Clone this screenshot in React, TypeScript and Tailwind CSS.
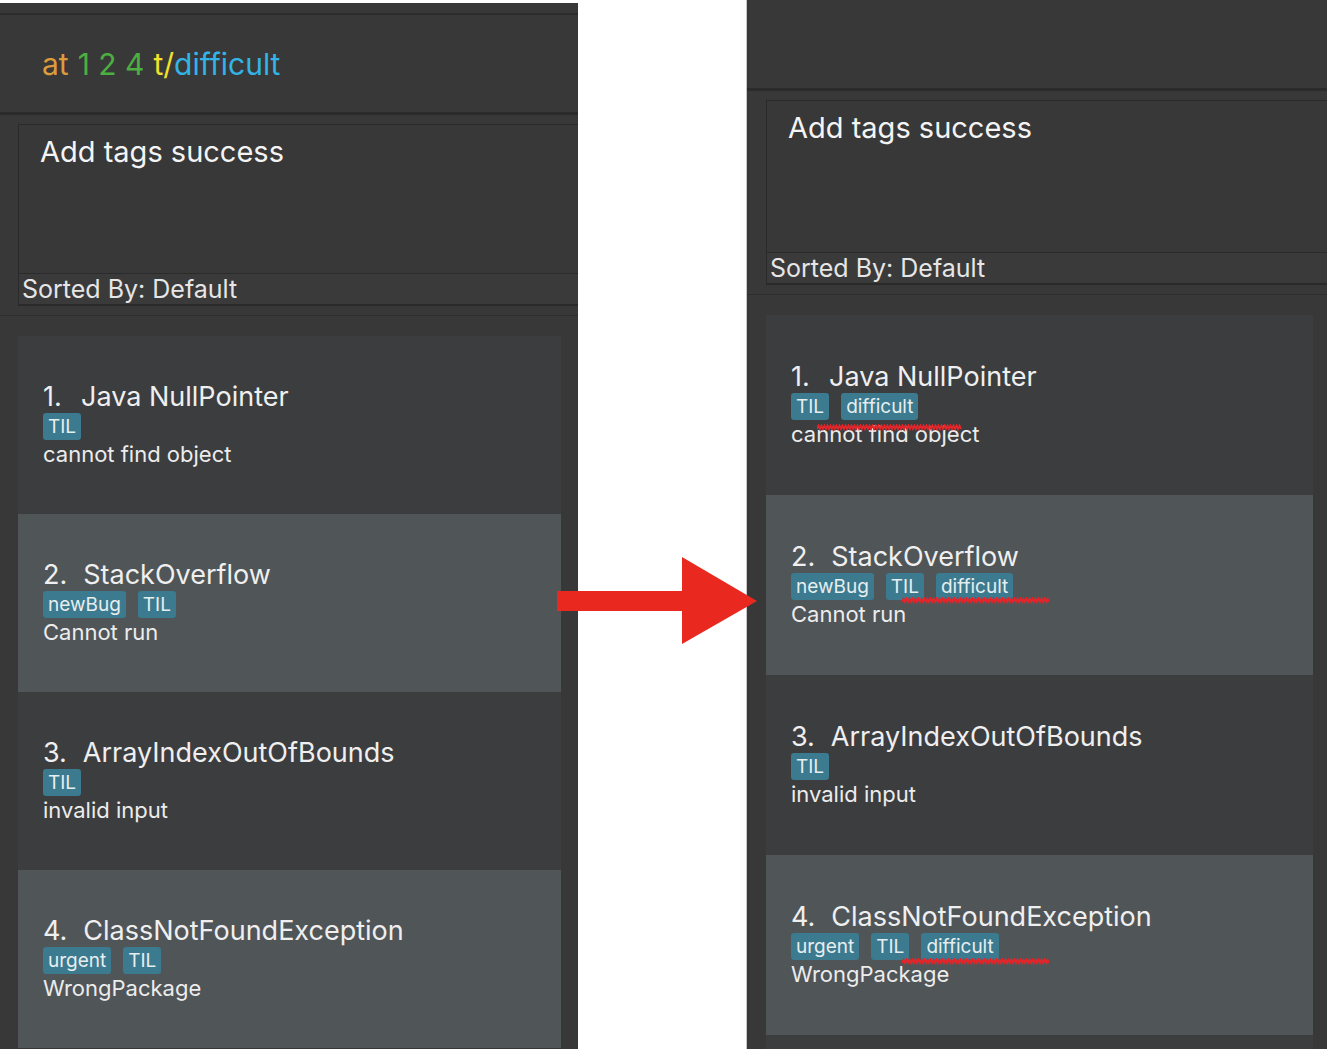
import React from 'react';

type Item = { name: string; tags: string[]; desc: string; squiggle?: { x: number; y: number; w: number } };

const font = { fontFamily: 'Inter, "Noto Sans", sans-serif' };

const Squiggle: React.FC<{ w: number }> = ({ w }) => {
    const pts: string[] = [];
    for (let x = 0; x <= w; x += 1.5) {
        pts.push(`${x},${Math.round(x / 1.5) % 2 === 0 ? 5 : 1.5}`);
    }
    return (
        <svg width={w} height={7} viewBox={`0 0 ${w} 7`}>
            <polyline points={pts.join(' ')} fill="none" stroke="#e4262a" strokeWidth="1.8" />
        </svg>
    );
};

const Tag: React.FC<{ label: string }> = ({ label }) => (
    <span className="h-[27px] px-[5px] rounded-[3px] bg-[#3c7a8f] text-[#e6eef0] text-[19px] leading-[27px]">{label}</span>
);

const Card: React.FC<{ i: number; item: Item; h: string }> = ({ i, item, h }) => (
    <div className={`${h} relative flex flex-col justify-center pl-[25px] ${i % 2 === 0 ? 'bg-[#3c3d3f]' : 'bg-[#505558]'}`}>
        <div className="flex text-[27px] leading-[32px] text-[#efefef]">
            <span className="min-w-[22px] mr-[16px]">{i + 1}.</span>
            <span>{item.name}</span>
        </div>
        <div className="flex gap-[12px]">
            {item.tags.map(t => <Tag key={t} label={t} />)}
        </div>
        <div className="text-[22px] leading-[29px] text-[#ececec]">{item.desc}</div>
        {item.squiggle && (
            <div className="absolute" style={{ left: item.squiggle.x, top: item.squiggle.y }}>
                <Squiggle w={item.squiggle.w} />
            </div>
        )}
    </div>
);

const before: Item[] = [
    { name: 'Java NullPointer', tags: ['TIL'], desc: 'cannot find object' },
    { name: 'StackOverflow', tags: ['newBug', 'TIL'], desc: 'Cannot run' },
    { name: 'ArrayIndexOutOfBounds', tags: ['TIL'], desc: 'invalid input' },
    { name: 'ClassNotFoundException', tags: ['urgent', 'TIL'], desc: 'WrongPackage' },
];

const after: Item[] = [
    { name: 'Java NullPointer', tags: ['TIL', 'difficult'], desc: 'cannot find object', squiggle: { x: 51, y: 109, w: 145 } },
    { name: 'StackOverflow', tags: ['newBug', 'TIL', 'difficult'], desc: 'Cannot run', squiggle: { x: 136, y: 102, w: 147 } },
    { name: 'ArrayIndexOutOfBounds', tags: ['TIL'], desc: 'invalid input' },
    { name: 'ClassNotFoundException', tags: ['urgent', 'TIL', 'difficult'], desc: 'WrongPackage', squiggle: { x: 136, y: 103, w: 147 } },
];

export default function App() {
    return (
        <div className="w-[1332px] h-[1049px] bg-white relative overflow-hidden flex" style={font}>
            {/* before */}
            <div className="w-[578px] mt-[3px] bg-[#383838] flex flex-col">
                <div className="h-[10px]" />
                <div className="h-[2px] bg-[#2b2b2b]" />
                <div className="h-[97px] flex items-center pl-[42px] text-[30px] leading-[36px]">
                    <span className="text-[#dd9c3c]">at </span>
                    <span className="text-[#4caf42] ml-[9px]">1 2 4 </span>
                    <span className="text-[#f2e12a] ml-[9px]">t/</span>
                    <span className="text-[#33b3e6]">difficult</span>
                </div>
                <div className="h-[3px] bg-[#2b2b2b]" />
                <div className="h-[200px] pt-[9px] pl-[18px]">
                    <div className="h-[182px] border-l border-t border-b-2 border-[#2a2a2a] flex flex-col">
                        <div className="h-[148px] pt-[10px] pl-[21px] text-[29px] leading-[34px] text-[#f4f4f4]">Add tags success</div>
                        <div className="h-[31px] border-t border-[#2b2b2b] bg-[#3a3a3a] pl-[3px] text-[25px] leading-[30px] text-[#e6e6e6]">Sorted By: Default</div>
                    </div>
                </div>
                <div className="h-[1px] bg-[#2e2e2e]" />
                <div className="pt-[20px] pl-[18px] pr-[17px] flex flex-col">
                    {before.map((it, i) => <Card key={i} i={i} item={it} h="h-[178px] shrink-0" />)}
                </div>
            </div>

            <div className="w-[168px]" />
            <div className="w-[1px] bg-[#c6c6c6]" />

            {/* after */}
            <div className="w-[580px] bg-[#383838] flex flex-col">
                <div className="h-[88px] shrink-0" />
                <div className="h-[3px] bg-[#2b2b2b] shrink-0" />
                <div className="h-[203px] pt-[9px] pl-[19px] shrink-0">
                    <div className="h-[185px] border-l border-t border-b-2 border-[#2a2a2a] flex flex-col">
                        <div className="h-[151px] pt-[10px] pl-[21px] text-[29px] leading-[34px] text-[#f4f4f4]">Add tags success</div>
                        <div className="h-[31px] border-t border-[#2b2b2b] bg-[#3a3a3a] pl-[3px] text-[25px] leading-[30px] text-[#e6e6e6]">Sorted By: Default</div>
                    </div>
                </div>
                <div className="h-[1px] bg-[#2e2e2e] shrink-0" />
                <div className="pt-[20px] pl-[19px] pr-[14px] flex flex-col">
                    {after.map((it, i) => <Card key={i} i={i} item={it} h="h-[180px] shrink-0" />)}
                    <div className="h-[180px] shrink-0 bg-[#3c3d3f]" />
                </div>
            </div>

            {/* arrow */}
            <svg className="absolute left-[557px] top-[557px]" width="202" height="88" viewBox="0 0 202 88">
                <rect x="0" y="34" width="126" height="20" fill="#e9281f" />
                <polygon points="125,0 200,44 125,87" fill="#e9281f" />
            </svg>
        </div>
    );
}
